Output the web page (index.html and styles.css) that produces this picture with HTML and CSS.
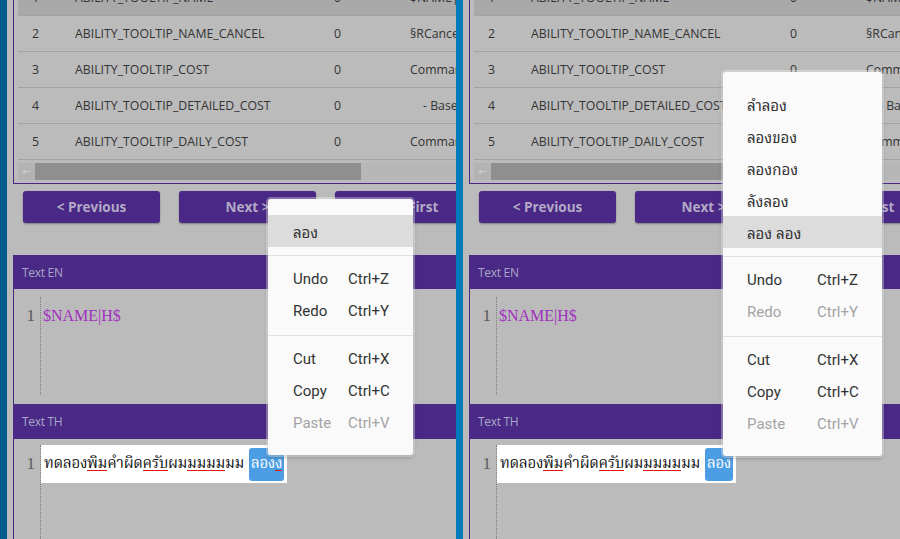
FILE: index.html
```html
<!DOCTYPE html>
<html lang="th">
<head>
<meta charset="utf-8">
<title>Localization editor</title>
<link rel="stylesheet" href="styles.css">
</head>
<body>
<div class="screen">
  <section class="panel panel-left">
    <div class="strip strip-dark"></div>
    <div class="main">
      <div class="grid-box">
        <div class="row row-sel"><span class="c1">1</span><span class="c2">ABILITY_TOOLTIP_NAME</span><span class="c3">0</span><span class="c4">$NAME|</span></div>
        <div class="row"><span class="c1">2</span><span class="c2">ABILITY_TOOLTIP_NAME_CANCEL</span><span class="c3">0</span><span class="c4">§RCancel</span></div>
        <div class="row"><span class="c1">3</span><span class="c2">ABILITY_TOOLTIP_COST</span><span class="c3">0</span><span class="c4">Command</span></div>
        <div class="row"><span class="c1">4</span><span class="c2">ABILITY_TOOLTIP_DETAILED_COST</span><span class="c3">0</span><span class="c4 indent">- Base</span></div>
        <div class="row"><span class="c1">5</span><span class="c2">ABILITY_TOOLTIP_DAILY_COST</span><span class="c3">0</span><span class="c4">Command</span></div>
        <div class="hscroll"><span class="arrow">←</span><span class="thumb"></span></div>
      </div>
      <div class="btns">
        <button class="btn">&lt; Previous</button>
        <button class="btn">Next &gt;</button>
        <button class="btn">Go to First</button>
      </div>
      <div class="hdr hdr-en">Text EN</div>
      <div class="editor editor-en">
        <div class="gutter"><span class="ln">1</span></div>
        <div class="code"><span class="en-text">$NAME|H$</span></div>
      </div>
      <div class="hdr hdr-th">Text TH</div>
      <div class="editor editor-th">
        <div class="gutter"><span class="ln">1</span></div>
        <div class="code"><span class="th-line">ทดลอง<span class="err">พิม</span>คำผิด<span class="err">ครับ</span>ผม<span class="err">มมมม</span>มม <span class="sel">ลอง<span class="err">ง</span></span></span></div>
      </div>
    </div>
  </section>
  <section class="panel panel-right">
    <div class="strip strip-mid"></div>
    <div class="main">
      <div class="grid-box">
        <div class="row row-sel"><span class="c1">1</span><span class="c2">ABILITY_TOOLTIP_NAME</span><span class="c3">0</span><span class="c4">$NAME|</span></div>
        <div class="row"><span class="c1">2</span><span class="c2">ABILITY_TOOLTIP_NAME_CANCEL</span><span class="c3">0</span><span class="c4">§RCancel</span></div>
        <div class="row"><span class="c1">3</span><span class="c2">ABILITY_TOOLTIP_COST</span><span class="c3">0</span><span class="c4">Command</span></div>
        <div class="row"><span class="c1">4</span><span class="c2">ABILITY_TOOLTIP_DETAILED_COST</span><span class="c3">0</span><span class="c4 indent">- Base</span></div>
        <div class="row"><span class="c1">5</span><span class="c2">ABILITY_TOOLTIP_DAILY_COST</span><span class="c3">0</span><span class="c4">Command</span></div>
        <div class="hscroll"><span class="arrow">←</span><span class="thumb"></span></div>
      </div>
      <div class="btns">
        <button class="btn">&lt; Previous</button>
        <button class="btn">Next &gt;</button>
        <button class="btn">Go to First</button>
      </div>
      <div class="hdr hdr-en">Text EN</div>
      <div class="editor editor-en">
        <div class="gutter"><span class="ln">1</span></div>
        <div class="code"><span class="en-text">$NAME|H$</span></div>
      </div>
      <div class="hdr hdr-th">Text TH</div>
      <div class="editor editor-th">
        <div class="gutter"><span class="ln">1</span></div>
        <div class="code"><span class="th-line">ทดลอง<span class="err">พิม</span>คำผิด<span class="err">ครับ</span>ผม<span class="err">มมมม</span>มม <span class="sel">ลอง</span></span></div>
      </div>
    </div>
  </section>

  <div class="menu menu-left">
    <div class="item hl"><span class="lbl th">ลอง</span></div>
    <div class="sep"></div>
    <div class="item"><span class="lbl">Undo</span><span class="key">Ctrl+Z</span></div>
    <div class="item"><span class="lbl">Redo</span><span class="key">Ctrl+Y</span></div>
    <div class="sep"></div>
    <div class="item"><span class="lbl">Cut</span><span class="key">Ctrl+X</span></div>
    <div class="item"><span class="lbl">Copy</span><span class="key">Ctrl+C</span></div>
    <div class="item dis"><span class="lbl">Paste</span><span class="key">Ctrl+V</span></div>
  </div>

  <div class="menu menu-right">
    <div class="item"><span class="lbl th">ลำลอง</span></div>
    <div class="item"><span class="lbl th">ลองของ</span></div>
    <div class="item"><span class="lbl th">ลองกอง</span></div>
    <div class="item"><span class="lbl th">ลังลอง</span></div>
    <div class="item hl"><span class="lbl th">ลอง ลอง</span></div>
    <div class="sep"></div>
    <div class="item"><span class="lbl">Undo</span><span class="key">Ctrl+Z</span></div>
    <div class="item dis"><span class="lbl">Redo</span><span class="key">Ctrl+Y</span></div>
    <div class="sep"></div>
    <div class="item"><span class="lbl">Cut</span><span class="key">Ctrl+X</span></div>
    <div class="item"><span class="lbl">Copy</span><span class="key">Ctrl+C</span></div>
    <div class="item dis"><span class="lbl">Paste</span><span class="key">Ctrl+V</span></div>
  </div>
</div>
</body>
</html>
```

FILE: styles.css
```css
* { box-sizing: border-box; }
html, body { margin: 0; padding: 0; }
body { background: #bbbbbb; font-family: "Open Sans", "Noto Sans", sans-serif; }

.screen {
  position: relative;
  width: 900px;
  height: 539px;
  overflow: hidden;
  display: flex;
  background: #bbbbbb;
}

.panel {
  display: flex;
  align-items: flex-start;
  height: 539px;
  overflow: hidden;
}
.panel-left { width: 456px; flex: none; }
.panel-right { flex: 1 1 auto; min-width: 0; }

.strip { width: 7px; flex: none; height: 539px; }
.strip-dark { background: #005a8b; }
.strip-mid { background: #007ab9; }

.main {
  flex: none;
  width: 640px;
  margin-left: 6px;
  display: flex;
  flex-direction: column;
}
.main > * { flex-shrink: 0; }

/* table */
.grid-box {
  margin-top: -25px;
  border: 1px solid #4a2885;
  padding: 4px 0 3px 4px;
}
.row {
  display: flex;
  align-items: center;
  height: 36px;
  border-bottom: 1px solid #a3a3a3;
  font-size: 12.3px;
  color: #333333;
  white-space: nowrap;
}
.row-sel { background: #a9a9a9; }
.c1 { width: 57px; padding-left: 14px; flex: none; }
.c2 { width: 259px; flex: none; }
.c3 { width: 76px; flex: none; }
.c4 { flex: none; }
.c4.indent { padding-left: 13px; }

.hscroll {
  margin-top: 3px;
  height: 17px;
  display: flex;
  background: #b7b7b7;
}
.arrow {
  width: 17px;
  height: 17px;
  background: #b3b3b3;
  color: #d2d2d2;
  font-family: "DejaVu Sans", sans-serif;
  font-size: 10px;
  line-height: 17px;
  text-align: center;
}
.thumb { width: 326px; height: 17px; background: #8f8f8f; }

/* buttons */
.btns {
  display: flex;
  gap: 19px;
  padding-left: 10px;
  margin-top: 7px;
}
.btn {
  width: 137px;
  height: 32px;
  flex: none;
  border: none;
  border-radius: 3px;
  background: #4a2885;
  color: #b3aac6;
  font-family: "Open Sans", sans-serif;
  font-weight: 700;
  font-size: 13.5px;
  box-shadow: 0 1px 2px rgba(0,0,0,0.35);
  padding: 0;
}

/* headers & editors */
.hdr {
  background: #4a2885;
  color: #a8a8c6;
  font-size: 12px;
  letter-spacing: -0.3px;
  padding-left: 9px;
  display: flex;
  align-items: center;
}
.hdr-en { margin-top: 32px; height: 34px; }
.hdr-th { height: 35px; }

.editor {
  border-left: 1px solid #4a2885;
  display: flex;
}
.editor-en { height: 115px; padding: 8px 0 9px; }
.editor-th { height: 110px; padding: 6px 0 0; }

.gutter {
  width: 27px;
  flex: none;
  border-right: 1px dotted #7c7c7c;
  text-align: right;
  padding-right: 5px;
}
.ln {
  font-family: "Liberation Serif", serif;
  font-size: 17px;
  color: #5a5a5a;
  display: block;
}
.editor-en .ln { line-height: 22px; margin-top: 8px; }
.editor-th .ln { line-height: 38px; }

.code { flex: 1; }
.en-text {
  display: inline-block;
  margin-top: 8px;
  margin-left: 2px;
  font-family: "Liberation Serif", serif;
  font-size: 16px;
  line-height: 22px;
  color: #a22fbf;
}
.th-line {
  display: inline-flex;
  align-items: center;
  height: 38px;
  background: #ffffff;
  padding: 0 3px 0 3px;
  font-family: "Noto Serif Thai", "Noto Sans Thai Looped", "Noto Sans Thai", "Tahoma", serif;
  font-size: 15px;
  line-height: 22px;
  letter-spacing: -0.3px;
  color: #111111;
  white-space: pre;
}
.err {
  display: inline-block;
  line-height: 22px;
  background-image: linear-gradient(#e31414, #e31414);
  background-repeat: no-repeat;
  background-size: 100% 1px;
  background-position: left 0 bottom 4px;
}
.sel {
  display: inline-block;
  height: 33px;
  line-height: 33px;
  background: #4c9de3;
  color: #ffffff;
  border-radius: 3px;
  padding: 0 2px;
  margin-left: 1px;
}

/* context menus */
.menu {
  position: absolute;
  background: #fafafa;
  border-radius: 3px;
  padding: 16px 0;
  box-shadow: 0 0 0 2px rgba(255,255,255,0.35), 0 2px 4px rgba(0,0,0,0.3);
  font-family: Roboto, "Noto Sans", sans-serif;
  font-size: 15px;
  color: #333333;
}
.menu-left { left: 268px; top: 199px; width: 145px; --lw: 55px; }
.menu-right { left: 723px; top: 72px; width: 159px; --lw: 70px; }

.item {
  display: flex;
  align-items: center;
  height: 32px;
  padding: 0 24px 0 25px;
  white-space: nowrap;
}
.menu-right .item { padding-left: 24px; }
.item.hl { background: #dcdcdc; }
.item.dis { color: #a4a4a4; }
.lbl { width: var(--lw); flex: none; }
.lbl.th { font-family: "Noto Sans Thai Looped", "Tahoma", Roboto, sans-serif; }
.sep { height: 1px; background: #e0e0e0; margin: 8px 0 7px; }
```
